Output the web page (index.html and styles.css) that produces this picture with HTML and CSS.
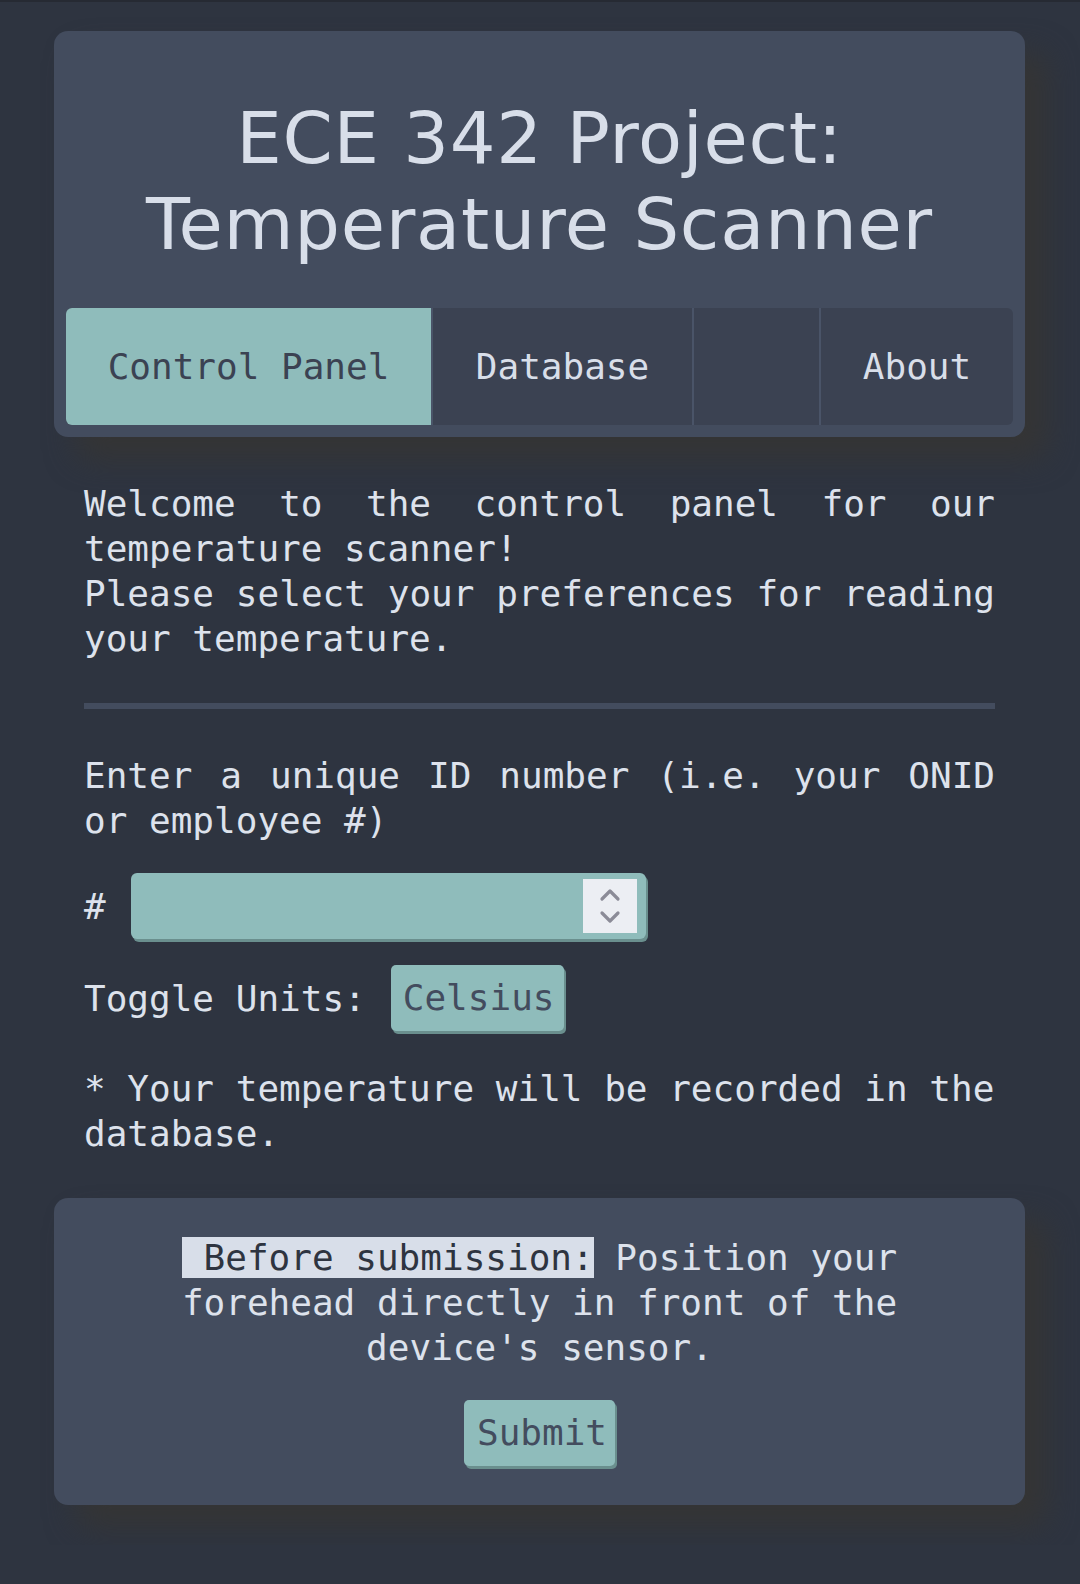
FILE: index.html
```html
<!DOCTYPE html>
<html lang="en">
<head>
<meta charset="utf-8">
<title>ECE 342 Project: Temperature Scanner</title>
<link rel="stylesheet" href="styles.css">
</head>
<body>
<div class="page">
  <header class="header-card">
    <h1 class="title">ECE 342 Project:<br>Temperature Scanner</h1>
    <nav class="tabs">
      <a class="tab tab-active tab-control">Control Panel</a>
      <span class="sep"></span>
      <a class="tab tab-db">Database</a>
      <span class="sep"></span>
      <a class="tab tab-empty"></a>
      <span class="sep"></span>
      <a class="tab tab-about">About</a>
    </nav>
  </header>

  <main class="content">
    <p class="intro">Welcome to the control panel for our temperature scanner!<br>Please select your preferences for reading your temperature.</p>
    <hr class="rule">
    <p class="prompt">Enter a unique ID number (i.e. your ONID or employee #)</p>
    <div class="id-row">
      <span class="hash">#</span>
      <div class="id-input">
        <div class="spinner">
          <svg width="28" height="44" viewBox="0 0 28 44">
            <path d="M6 15 L14 7 L22 15" fill="none" stroke="#8b8b97" stroke-width="3.2" stroke-linecap="round" stroke-linejoin="round"/>
            <path d="M6 29 L14 37 L22 29" fill="none" stroke="#8b8b97" stroke-width="3.2" stroke-linecap="round" stroke-linejoin="round"/>
          </svg>
        </div>
      </div>
    </div>
    <div class="units-row">
      <span class="units-label">Toggle Units:</span>
      <span class="btn btn-units">Celsius</span>
    </div>
    <p class="note">* Your temperature will be recorded in the database.</p>
  </main>

  <section class="submit-card">
    <p class="instructions"><mark class="hl">&nbsp;Before submission:</mark> Position your forehead directly in front of the device's sensor.</p>
    <div class="submit-wrap"><span class="btn btn-submit">Submit</span></div>
  </section>
</div>
</body>
</html>
```

FILE: styles.css
```css
html, body {
  margin: 0;
  padding: 0;
  background: #2e3440;
}

body {
  font-family: "DejaVu Sans Mono", monospace;
  font-size: 36px;
  line-height: 45px;
  color: #dde2ec;
  border-top: 2px solid #262a33;
}

.page {
  padding: 29px 55px 40px 54px;
}

.header-card {
  background: #434c5e;
  border-radius: 14px;
  padding: 64px 12px 12px 12px;
  box-shadow: 22px 22px 30px #353535;
}

.title {
  margin: 0 0 41px 0;
  font-family: "DejaVu Sans", sans-serif;
  font-weight: normal;
  font-size: 72px;
  line-height: 86px;
  letter-spacing: 0.7px;
  text-align: center;
  color: #d8dee9;
}

.tabs {
  display: flex;
  height: 117px;
  background: #3b4252;
  border-radius: 6px;
  overflow: hidden;
}

.tab {
  display: flex;
  align-items: center;
  justify-content: center;
  color: #d8dee9;
  padding: 0 42px;
  white-space: nowrap;
}

.tab-control { width: 365px; box-sizing: border-box; }
.tab-db { width: 259px; box-sizing: border-box; }
.tab-empty { width: 125px; box-sizing: border-box; }
.tab-about { width: 192px; box-sizing: border-box; }

.tab-active {
  background: #8fbcbb;
  color: #3b4252;
}

.sep {
  width: 2px;
  background: #4a5468;
}

.content {
  padding: 0 30px;
}

.intro {
  margin: 44px 0 0 0;
  text-align: justify;
}

.rule {
  margin: 42px 0 0 0;
  height: 6px;
  border: none;
  background: #434c5e;
}

.prompt {
  margin: 44px 0 0 0;
  text-align: justify;
}

.id-row {
  display: flex;
  align-items: center;
  margin-top: 30px;
}

.hash {
  width: 47px;
}

.id-input {
  width: 515px;
  height: 66px;
  background: #8fbcbb;
  border-radius: 6px;
  box-shadow: 2px 3px 0 #6a8f8e;
  display: flex;
  align-items: center;
  justify-content: flex-end;
  padding-right: 9px;
  box-sizing: border-box;
}

.spinner {
  width: 54px;
  height: 54px;
  background: #eceef3;
  display: flex;
  align-items: center;
  justify-content: center;
}

.units-row {
  display: flex;
  align-items: center;
  margin-top: 26px;
}

.units-label {
  margin-right: 25px;
}

.btn {
  display: inline-block;
  background: #8fbcbb;
  color: #434c5e;
  border-radius: 5px;
  box-shadow: 2px 3px 0 #6a8f8e;
  line-height: 66px;
  height: 66px;
}

.btn-units {
  padding: 0 10px 0 12px;
}

.note {
  margin: 35px 0 0 0;
}

.submit-card {
  margin-top: 42px;
  background: #434c5e;
  border-radius: 14px;
  padding: 37px 20px 39px 20px;
  box-shadow: 22px 22px 30px #353535;
}

.instructions {
  margin: 0 auto;
  max-width: 740px;
  text-align: center;
}

.hl {
  background: #d8dee9;
  color: #2e3440;
}

.submit-wrap {
  display: flex;
  justify-content: center;
  margin-top: 30px;
}

.btn-submit {
  padding: 0 8px 0 13px;
}
```
